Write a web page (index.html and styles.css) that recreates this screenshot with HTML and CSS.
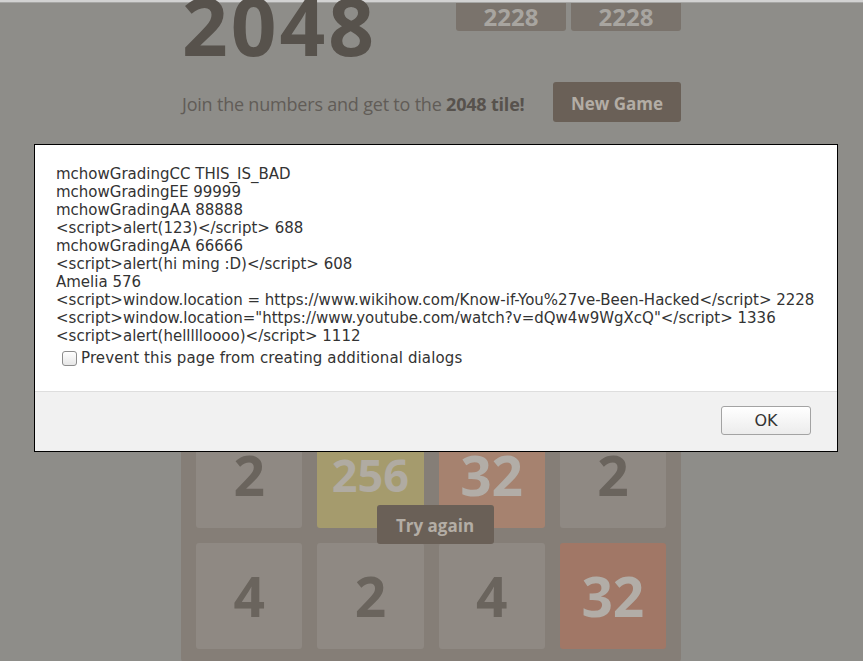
FILE: index.html
```html
<!DOCTYPE html>
<html>
<head>
<meta charset="utf-8">
<link rel="stylesheet" href="styles.css">
</head>
<body>
<div class="topbar"></div>
<div class="container">
  <div class="heading">
    <h1 class="title">2048</h1>
    <div class="scores">
      <div class="score">2228</div>
      <div class="score">2228</div>
    </div>
  </div>
  <div class="above-game">
    <p class="intro">Join the numbers and get to the <strong>2048 tile!</strong></p>
    <a class="btn new-game">New Game</a>
  </div>
  <div class="board">
    <div class="grid">
      <div class="cell"></div><div class="cell"></div><div class="cell"></div><div class="cell"></div>
      <div class="cell"></div><div class="cell"></div><div class="cell"></div><div class="cell"></div>
      <div class="cell t2">2</div><div class="cell t256">256</div><div class="cell t32">32</div><div class="cell t2">2</div>
      <div class="cell t2">4</div><div class="cell t2">2</div><div class="cell t2">4</div><div class="cell t32b">32</div>
    </div>
    <div class="message">
      <a class="btn retry">Try again</a>
    </div>
  </div>
</div>

<div class="dialog">
  <div class="dialog-body">
    <div class="dialog-text">mchowGradingCC THIS_IS_BAD<br>mchowGradingEE 99999<br>mchowGradingAA 88888<br>&lt;script&gt;alert(123)&lt;/script&gt; 688<br>mchowGradingAA 66666<br>&lt;script&gt;alert(hi ming :D)&lt;/script&gt; 608<br>Amelia 576<br>&lt;script&gt;window.location = https://www.wikihow.com/Know-if-You%27ve-Been-Hacked&lt;/script&gt; 2228<br>&lt;script&gt;window.location="https://www.youtube.com/watch?v=dQw4w9WgXcQ"&lt;/script&gt; 1336<br>&lt;script&gt;alert(hellllloooo)&lt;/script&gt; 1112</div>
    <label class="prevent"><span class="checkbox"></span><span>Prevent this page from creating additional dialogs</span></label>
  </div>
  <div class="dialog-footer">
    <button class="ok">OK</button>
  </div>
</div>
</body>
</html>
```
FILE: styles.css
```css
html, body {
  margin: 0;
  padding: 0;
}
body {
  width: 863px;
  height: 661px;
  overflow: hidden;
  background: #8e8d89;
  font-family: "Open Sans", "DejaVu Sans", sans-serif;
  position: relative;
}
.topbar {
  height: 2px;
  background: #d2d2d2;
  border-bottom: 1px solid #a6a6a4;
}
.container {
  width: 500px;
  margin-left: 181px;
}
.heading {
  display: flex;
  justify-content: space-between;
  align-items: flex-start;
}
.title {
  margin: -18px 0 0 1px;
  font-size: 80px;
  line-height: 80px;
  font-weight: 700;
  color: #57524c;
  letter-spacing: 3px;
}
.scores {
  display: flex;
  gap: 5px;
}
.score {
  width: 110px;
  height: 28px;
  line-height: 28px;
  background: #7a736c;
  border-radius: 0 0 3px 3px;
  color: #a8a5a0;
  font-size: 24px;
  font-weight: 700;
  text-align: center;
}
.above-game {
  display: flex;
  justify-content: space-between;
  align-items: center;
  margin-top: 17px;
}
.intro {
  margin: 4px 0 0 1px;
  font-size: 18px;
  color: #615c57;
  letter-spacing: -0.2px;
}
.intro strong {
  color: #57524d;
}
.btn {
  display: block;
  background: #6a6057;
  color: #b3ada5;
  border-radius: 3px;
  font-weight: 700;
  font-size: 17px;
  text-align: center;
}
.new-game {
  width: 128px;
  height: 40px;
  line-height: 44px;
}
.board {
  margin-top: 42px;
  width: 500px;
  height: 500px;
  background: #857e77;
  border-radius: 6px;
  position: relative;
}
.grid {
  display: grid;
  grid-template-columns: repeat(4, 1fr);
  grid-template-rows: repeat(4, 1fr);
  gap: 15px;
  padding: 15px;
  height: 500px;
  box-sizing: border-box;
}
.cell {
  background: #8b847d;
  border-radius: 3px;
  display: flex;
  align-items: center;
  justify-content: center;
  font-weight: 700;
  font-size: 55px;
  color: #6a645d;
}
.t2 {
  background: #8f8983;
}
.t256 {
  background: #a59b6d;
  color: #b0aba2;
  font-size: 45px;
}
.t32 {
  background: #a6826f;
  color: #b2ada7;
}
.t32b {
  background: #a17766;
  color: #b2ada7;
}
.message {
  position: absolute;
  left: 0;
  top: 341px;
  width: 100%;
  display: flex;
  justify-content: center;
  padding-left: 8px;
  box-sizing: border-box;
}
.retry {
  width: 117px;
  height: 39px;
  line-height: 41px;
}
.dialog {
  position: absolute;
  left: 34px;
  top: 144px;
  width: 804px;
  height: 308px;
  box-sizing: border-box;
  border: 1px solid #000;
  background: #fff;
  display: flex;
  flex-direction: column;
  font-family: "DejaVu Sans", sans-serif;
  color: #333;
}
.dialog-body {
  flex: 1;
  padding: 20px 21px 0 21px;
}
.dialog-text {
  font-size: 15px;
  line-height: 18px;
}
.prevent {
  display: flex;
  align-items: center;
  margin-top: 4px;
  padding-left: 6px;
  height: 18px;
  font-size: 15px;
  letter-spacing: 0.12px;
}
.checkbox {
  width: 13px;
  height: 13px;
  border: 1px solid #8d8d8d;
  border-radius: 3px;
  background: linear-gradient(#ffffff, #e6e6e6);
  margin-right: 4px;
  margin-top: 1px;
}
.dialog-footer {
  height: 60px;
  box-sizing: border-box;
  border-top: 1px solid #dedede;
  background: #f1f1f1;
  display: flex;
  justify-content: flex-end;
  align-items: flex-start;
  padding: 14px 26px 0 0;
}
.ok {
  width: 90px;
  height: 29px;
  border: 1px solid #a3a3a3;
  border-radius: 3px;
  background: linear-gradient(#ffffff, #ececec);
  font-family: "DejaVu Sans", sans-serif;
  font-size: 16px;
  color: #333;
  padding: 0;
}
```
